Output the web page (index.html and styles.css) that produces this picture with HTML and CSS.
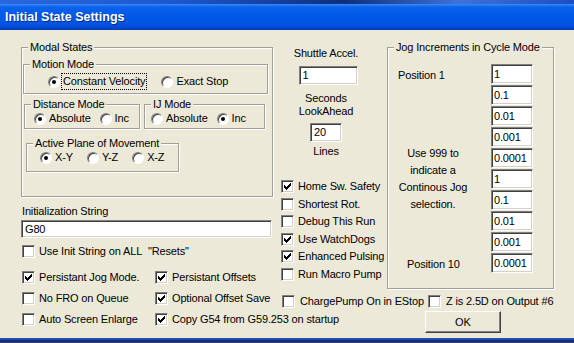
FILE: index.html
```html
<!DOCTYPE html>
<html lang="en">
<head>
  <meta charset="UTF-8" />
  <title>Initial State Settings</title>
  <link rel="stylesheet" href="styles.css">
</head>
<body>

<div class="topstrip"></div>
<div class="titlebar"><span>Initial State Settings</span></div>

<div class="dialog">
  <!-- left column -->
  <div class="left">
    <fieldset class="grp modal">
      <legend>Modal States</legend>

      <fieldset class="grp motion">
        <legend>Motion Mode</legend>
        <div class="opts">
          <span class="opt"><span class="radio on"></span><span class="focus">Constant Velocity</span></span>
          <span class="opt gap16"><span class="radio"></span>Exact Stop</span>
        </div>
      </fieldset>

      <div class="pair">
        <fieldset class="grp dist">
          <legend>Distance Mode</legend>
          <div class="opts">
            <span class="opt"><span class="radio on"></span>Absolute</span>
            <span class="opt gap9"><span class="radio"></span>Inc</span>
          </div>
        </fieldset>
        <fieldset class="grp ij">
          <legend>IJ Mode</legend>
          <div class="opts">
            <span class="opt"><span class="radio"></span>Absolute</span>
            <span class="opt gap9"><span class="radio on"></span>Inc</span>
          </div>
        </fieldset>
      </div>

      <fieldset class="grp plane">
        <legend>Active Plane of Movement</legend>
        <div class="opts">
          <span class="opt"><span class="radio on"></span>X-Y</span>
          <span class="opt gap14"><span class="radio"></span>Y-Z</span>
          <span class="opt gap14"><span class="radio"></span>X-Z</span>
        </div>
      </fieldset>
    </fieldset>

    <div class="caption">Initialization String</div>
    <div class="edit wide">G80</div>
    <div class="chk init"><span class="box"></span>Use Init String on ALL&nbsp; &quot;Resets&quot;</div>

    <div class="chkgrid">
      <div class="chk"><span class="box on"><svg viewBox="0 0 7 7"><path d="M6 0H7V3H6V4H5V5H4V6H3V7H2V6H1V5H0V2H1V3H2V4H3V3H4V2H5V1H6Z"/></svg></span>Persistant Jog Mode.</div>
      <div class="chk"><span class="box on"><svg viewBox="0 0 7 7"><path d="M6 0H7V3H6V4H5V5H4V6H3V7H2V6H1V5H0V2H1V3H2V4H3V3H4V2H5V1H6Z"/></svg></span>Persistant Offsets</div>
      <div class="chk"><span class="box"></span>No FRO on Queue</div>
      <div class="chk"><span class="box on"><svg viewBox="0 0 7 7"><path d="M6 0H7V3H6V4H5V5H4V6H3V7H2V6H1V5H0V2H1V3H2V4H3V3H4V2H5V1H6Z"/></svg></span>Optional Offset Save</div>
      <div class="chk"><span class="box"></span>Auto Screen Enlarge</div>
      <div class="chk"><span class="box on"><svg viewBox="0 0 7 7"><path d="M6 0H7V3H6V4H5V5H4V6H3V7H2V6H1V5H0V2H1V3H2V4H3V3H4V2H5V1H6Z"/></svg></span>Copy G54 from G59.253 on startup</div>
    </div>
  </div>

  <!-- right side -->
  <div class="right">
    <div class="upper">
      <div class="mid">
        <div class="shuttle">
          <div class="t-shuttle">Shuttle Accel.</div>
          <div class="edit accel">1</div>
          <div class="t-seconds">Seconds<br>LookAhead</div>
          <div class="edit lines">20</div>
          <div class="t-lines">Lines</div>
        </div>
        <div class="checks">
          <div class="chk"><span class="box on"><svg viewBox="0 0 7 7"><path d="M6 0H7V3H6V4H5V5H4V6H3V7H2V6H1V5H0V2H1V3H2V4H3V3H4V2H5V1H6Z"/></svg></span>Home Sw. Safety</div>
          <div class="chk"><span class="box"></span>Shortest Rot.</div>
          <div class="chk"><span class="box"></span>Debug This Run</div>
          <div class="chk"><span class="box on"><svg viewBox="0 0 7 7"><path d="M6 0H7V3H6V4H5V5H4V6H3V7H2V6H1V5H0V2H1V3H2V4H3V3H4V2H5V1H6Z"/></svg></span>Use WatchDogs</div>
          <div class="chk"><span class="box on"><svg viewBox="0 0 7 7"><path d="M6 0H7V3H6V4H5V5H4V6H3V7H2V6H1V5H0V2H1V3H2V4H3V3H4V2H5V1H6Z"/></svg></span>Enhanced Pulsing</div>
          <div class="chk"><span class="box"></span>Run Macro Pump</div>
        </div>
      </div>

      <fieldset class="grp jog">
        <legend>Jog Increments in Cycle Mode</legend>
        <div class="jog-grid">
          <div class="pos1">Position 1</div>
          <div class="note">Use 999 to<br>indicate a<br>Continous Jog<br>selection.</div>
          <div class="pos10">Position 10</div>
          <div class="edit inc r1">1</div>
          <div class="edit inc r2">0.1</div>
          <div class="edit inc r3">0.01</div>
          <div class="edit inc r4">0.001</div>
          <div class="edit inc r5">0.0001</div>
          <div class="edit inc r6">1</div>
          <div class="edit inc r7">0.1</div>
          <div class="edit inc r8">0.01</div>
          <div class="edit inc r9">0.001</div>
          <div class="edit inc r10">0.0001</div>
        </div>
      </fieldset>
    </div>

    <div class="flags">
      <div class="chk charge"><span class="box"></span>ChargePump On in EStop</div>
      <div class="chk"><span class="box"></span>Z is 2.5D on Output #6</div>
    </div>

    <button class="ok">OK</button>
  </div>
</div>

<div class="taskbar"></div>

</body>
</html>
```

FILE: styles.css
```css
html, body {
  margin: 0;
  padding: 0;
  width: 574px;
  height: 343px;
  overflow: hidden;
  background: #ece9d8;
  font-family: "Liberation Sans", Arial, sans-serif;
  font-size: 11px;
  line-height: 13px;
  letter-spacing: -0.15px;
  color: #000;
}

.topstrip {
  height: 4px;
  background: linear-gradient(90deg, #2a66dc, #1d58d0 30%, #0f2f7c 60%, #3e72d8 80%, #1b4fc4);
}

.titlebar {
  height: 26px;
  display: flex;
  align-items: center;
  padding-left: 5px;
  background: linear-gradient(#3b8cf6 0, #0a62ec 3px, #0058e8 45%, #0054e2 75%, #004ad4 90%, #003cae 100%);
  color: #fff;
  font-weight: bold;
  font-size: 12.5px;
  letter-spacing: 0;
  text-shadow: 1px 1px 0 #0a2a8a;
}

.dialog {
  height: 308px;
  display: flex;
  gap: 8px;
  padding-left: 21px;
  background: #ece9d8;
}

.taskbar {
  height: 5px;
  background: linear-gradient(#2a56c8 0, #1941a5 2px, #0b2466 3px, #3b4a6c 100%);
}

/* group boxes */
.grp {
  margin: 0;
  padding: 0;
  min-width: 0;
  border: 1px solid #a2a096;
  box-shadow: inset 1px 1px 0 #fff, 1px 1px 0 #fff;
}

.grp legend {
  margin-left: 6px;
  padding: 0 2px;
  line-height: 13px;
  background: #ece9d8;
}

.opts {
  display: flex;
  align-items: center;
  height: 13px;
}

.opt {
  display: flex;
  align-items: center;
  gap: 3px;
  white-space: nowrap;
}

.gap9 { margin-left: 9px; }
.gap14 { margin-left: 14px; }
.gap16 { margin-left: 15px; }

.focus {
  outline: 1px dotted #000;
  padding: 1px 1px;
  margin-left: -1px;
}

.radio {
  width: 12px;
  height: 12px;
  box-sizing: border-box;
  border-radius: 50%;
  background: #fff;
  border: 1px solid;
  border-color: #808080 #fff #fff #808080;
  box-shadow: inset 1px 1px 0 #404040;
  position: relative;
  flex: none;
}

.radio.on::after {
  content: "";
  position: absolute;
  left: 3px;
  top: 3px;
  width: 4px;
  height: 4px;
  border-radius: 50%;
  background: #000;
}

.box {
  width: 13px;
  height: 13px;
  box-sizing: border-box;
  background: #fff;
  border: 1px solid;
  border-color: #808080 #fff #fff #808080;
  box-shadow: inset 1px 1px 0 #404040, inset -1px -1px 0 #d4d0c8;
  display: flex;
  align-items: center;
  justify-content: center;
  flex: none;
}

.box svg {
  width: 7px;
  height: 7px;
  display: block;
  shape-rendering: crispEdges;
}

.chk {
  display: flex;
  align-items: center;
  gap: 4px;
  white-space: nowrap;
}

.edit {
  box-sizing: border-box;
  background: #fff;
  border: 1px solid;
  border-color: #808080 #fff #fff #808080;
  box-shadow: inset 1px 1px 0 #404040, inset -1px -1px 0 #d4d0c8;
  padding-left: 3px;
  text-align: left;
  white-space: nowrap;
}

/* left column */
.left {
  width: 252px;
  flex: none;
}

.modal {
  margin-top: 11px;
  padding-bottom: 24px;
}

.motion {
  width: 245px;
  box-sizing: border-box;
  margin: 4px 0 0 1px;
  padding: 4px 0 5px 0;
}

.motion .opts { padding-left: 24px; }

.pair {
  display: flex;
  gap: 4px;
  margin: 4px 0 0 2px;
}

.dist {
  width: 116px;
  box-sizing: border-box;
  padding: 1px 0 3px 0;
}

.dist .opts { padding-left: 9px; }

.ij {
  width: 121px;
  box-sizing: border-box;
  padding: 1px 0 3px 0;
}

.ij .opts { padding-left: 6px; }

.plane {
  width: 153px;
  box-sizing: border-box;
  margin: 8px 0 0 4px;
  padding: 1px 0 7px 0;
}

.plane .opts { padding-left: 13px; }

.caption {
  margin-top: 8px;
  padding-left: 1px;
}

.wide {
  width: 251px;
  height: 18px;
  line-height: 16px;
  margin-top: 2px;
}

.init {
  margin: 7px 0 0 1px;
  gap: 4px;
  height: 13px;
}

.chkgrid {
  display: grid;
  grid-template-columns: 133px auto;
  grid-auto-rows: 21px;
  margin: 9px 0 0 1px;
}

/* right side */
.right {
  flex: 1;
  display: flex;
  flex-direction: column;
  align-items: flex-start;
}

.upper {
  display: flex;
}

.mid {
  width: 106px;
  flex: none;
}

.shuttle {
  width: 90px;
  display: flex;
  flex-direction: column;
  align-items: center;
  text-align: center;
}

.t-shuttle { margin-top: 17px; }

.accel {
  width: 59px;
  height: 19px;
  line-height: 17px;
  margin-top: 6px;
  margin-left: 4px;
}

.t-seconds { margin-top: 7px; }

.lines {
  width: 32px;
  height: 19px;
  line-height: 17px;
  margin-top: 5px;
}

.t-lines { margin-top: 3px; }

.checks {
  margin-top: 20px;
}

.checks .chk {
  height: 17.5px;
}

.jog {
  width: 167px;
  box-sizing: border-box;
  margin-top: 11px;
  padding: 10px 0 15px 0;
}

.jog-grid {
  display: grid;
  grid-template-columns: 103px 42px;
  grid-template-rows: repeat(10, 20px);
  row-gap: 1px;
}

.inc {
  grid-column: 2;
  line-height: 18px;
  padding-left: 2px;
}

.r1 { grid-row: 1; }
.r2 { grid-row: 2; }
.r3 { grid-row: 3; }
.r4 { grid-row: 4; }
.r5 { grid-row: 5; }
.r6 { grid-row: 6; }
.r7 { grid-row: 7; }
.r8 { grid-row: 8; }
.r9 { grid-row: 9; }
.r10 { grid-row: 10; }

.pos1 {
  grid-column: 1;
  grid-row: 1;
  align-self: center;
  padding-left: 10px;
  margin-top: 3px;
}

.note {
  grid-column: 1;
  grid-row: 4 / 9;
  align-self: center;
  text-align: center;
  width: 90px;
  line-height: 17px;
}

.pos10 {
  grid-column: 1;
  grid-row: 10;
  align-self: center;
  padding-left: 19px;
  margin-top: 3px;
}

.flags {
  display: flex;
  align-items: center;
  height: 13px;
  margin: 6px 0 0 1px;
}

.flags .chk { gap: 5px; }

.charge {
  width: 146px;
}

.ok {
  margin: 3px 0 0 144px;
  width: 76px;
  height: 22px;
  padding: 0;
  font: inherit;
  color: #000;
  background: #ece9d8;
  border: 1px solid;
  border-color: #fff #404040 #404040 #fff;
  box-shadow: inset -1px -1px 0 #808080;
}
```
